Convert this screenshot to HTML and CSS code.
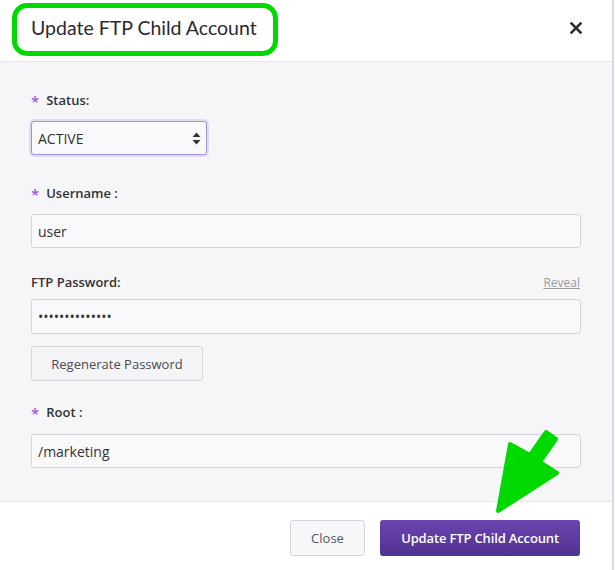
FILE: index.html
```html
<!DOCTYPE html>
<html>
<head>
<meta charset="utf-8">
<link rel="stylesheet" href="styles.css">
</head>
<body>
<div class="modal">
  <div class="header">
    <h1 class="title">Update FTP Child Account</h1>
    <svg class="close-x" width="12" height="12" viewBox="0 0 12 12"><path d="M1.5 1.5 L10.5 10.5 M10.5 1.5 L1.5 10.5" stroke="#2f2f36" stroke-width="2.6" stroke-linecap="square"/></svg>
    <div class="highlight"></div>
  </div>
  <div class="content">
    <div class="label lbl-status"><span class="req">*</span>Status:</div>
    <div class="select-wrap">
      <select class="select">
        <option>ACTIVE</option>
        <option>INACTIVE</option>
      </select>
      <svg class="select-arrows" width="9" height="13" viewBox="0 0 9 13"><path d="M4.5 0.5 L8.5 5 L0.5 5 Z M4.5 12.5 L8.5 8 L0.5 8 Z" fill="#333"/></svg>
    </div>
    <div class="label lbl-user"><span class="req">*</span>Username :</div>
    <input class="input" type="text" value="user">
    <div class="label-row">
      <div class="label">FTP Password:</div>
      <a class="reveal">Reveal</a>
    </div>
    <input class="input pw" type="password" value="abcdefghijklmn">
    <button class="btn btn-regen">Regenerate Password</button>
    <div class="label lbl-root"><span class="req">*</span>Root :</div>
    <input class="input" type="text" value="/marketing">
  </div>
  <div class="footer">
    <button class="btn btn-close">Close</button>
    <button class="btn btn-primary">Update FTP Child Account</button>
  </div>
  <svg class="arrow" width="615" height="570" viewBox="0 0 615 570">
    <polygon points="546,432 556,439 540,462 557,473 498,511 510,444 530,455" fill="#00d900" stroke="#00d900" stroke-width="4" stroke-linejoin="round"/>
  </svg>
</div>
</body>
</html>
```
FILE: styles.css
```css
* { box-sizing: border-box; }
html, body { margin: 0; padding: 0; }
body {
  font-family: "Open Sans", "Liberation Sans", sans-serif;
  color: #333;
  background: #fff;
  width: 615px;
  height: 570px;
  overflow: hidden;
}
.modal {
  position: relative;
  width: 614px;
  height: 570px;
  border-right: 2px solid #dcd8e8;
  display: flex;
  flex-direction: column;
  background: #fff;
}
.header {
  position: relative;
  height: 62px;
  flex: none;
  border-bottom: 1px solid #e5e5ea;
  display: flex;
  align-items: center;
  justify-content: space-between;
  padding: 0 30px 6px 31px;
}
.title {
  margin: 0;
  font-family: "Lato", "DejaVu Sans", sans-serif;
  font-weight: 400;
  font-size: 19.5px;
  color: #2a2a30;
  letter-spacing: 0px;
}
.close-x {
  display: block;
}
.highlight {
  position: absolute;
  left: 12px;
  top: 3px;
  width: 266px;
  height: 53px;
  border: 5px solid #00d900;
  border-radius: 15px;
}
.content {
  flex: none;
  height: 439px;
  background: #f6f6f9;
  padding: 28px 32px 0 31px;
  display: flex;
  flex-direction: column;
}
.label {
  font-size: 13px;
  font-weight: 600;
  line-height: 18px;
  color: #333;
}
.req {
  color: #a651d8;
  font-size: 15px;
  margin-right: 7px;
  position: relative;
  top: 2px;
}
.lbl-status { margin-bottom: 12px; }
.lbl-user { margin-top: 28px; margin-bottom: 12px; }
.lbl-root { margin-top: 21px; margin-bottom: 13px; }
.label-row {
  margin-top: 25px;
  margin-bottom: 8px;
  display: flex;
  justify-content: space-between;
  align-items: center;
}
.reveal {
  font-size: 12px;
  color: #999;
  text-decoration: underline;
}
.select-wrap {
  position: relative;
  width: 176px;
  height: 34px;
}
.select {
  appearance: none;
  -webkit-appearance: none;
  width: 176px;
  height: 34px;
  border: 1px solid #a293d8;
  box-shadow: 0 0 0 2px #e2dcf3;
  border-radius: 3px;
  background: #f9f9fb;
  font-family: "Open Sans", "Liberation Sans", sans-serif;
  font-size: 14px;
  color: #333;
  padding: 0 6px;
  outline: none;
}
.select-arrows {
  position: absolute;
  right: 6px;
  top: 11px;
}
.input {
  width: 550px;
  height: 34px;
  border: 1px solid #d3d5dc;
  border-radius: 3px;
  background: #f9f9fb;
  font-family: "Open Sans", "Liberation Sans", sans-serif;
  font-size: 14px;
  color: #333;
  padding: 0 6px;
  outline: none;
}
.pw { height: 35px; }
.btn {
  font-family: "Open Sans", "Liberation Sans", sans-serif;
  font-size: 13px;
  border-radius: 3px;
  cursor: pointer;
}
.btn-regen {
  margin-top: 12px;
  width: 172px;
  height: 35px;
  background: #f4f4f7;
  border: 1px solid #d5d5dd;
  color: #4a4a55;
  align-self: flex-start;
}
.footer {
  flex: 1;
  border-top: 1px solid #e5e5ea;
  display: flex;
  justify-content: flex-end;
  align-items: flex-start;
  gap: 15px;
  padding: 18px 32px 0 0;
}
.btn-close {
  width: 75px;
  height: 36px;
  background: #f7f7f9;
  border: 1px solid #d5d5dd;
  color: #555560;
}
.btn-primary {
  width: 200px;
  height: 36px;
  border: none;
  background: linear-gradient(#6a45b0, #4f3290);
  color: #fff;
  font-weight: 600;
  letter-spacing: -0.15px;
}
.arrow {
  position: absolute;
  left: 0;
  top: 0;
  pointer-events: none;
}
```
